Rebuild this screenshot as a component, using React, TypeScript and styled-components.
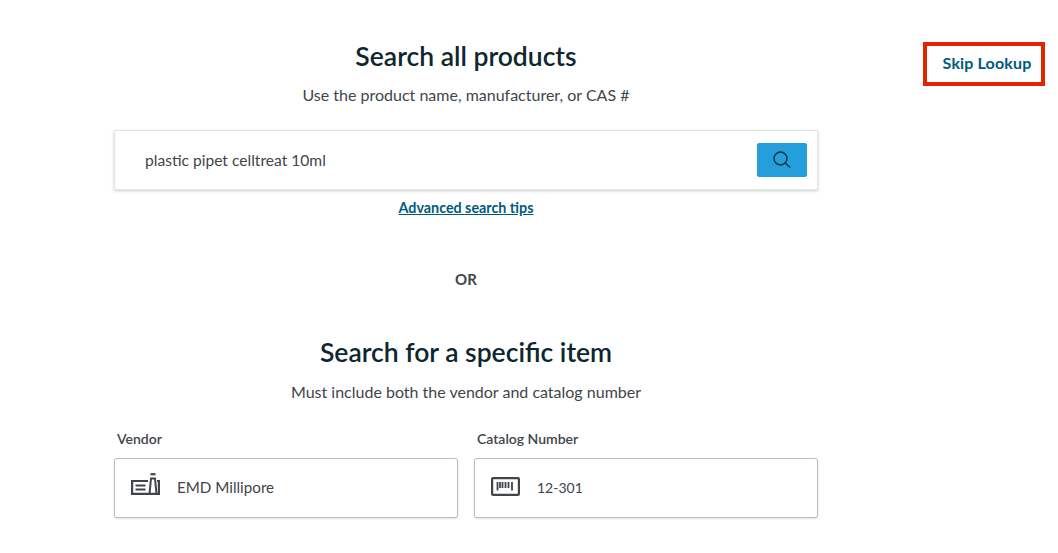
import * as React from 'react';
import styled, { createGlobalStyle } from 'styled-components';

const GlobalStyle = createGlobalStyle`
  html, body {
    margin: 0;
    padding: 0;
    background: #fff;
    font-family: Lato, "Open Sans", sans-serif;
    color: #414549;
  }
`;

const SearchIcon = () => (
  <svg width="18" height="18" viewBox="0 0 18 18" fill="none" stroke="#12303f" strokeWidth="1.4">
    <circle cx="7.5" cy="7.5" r="6.5" />
    <path d="M12.3 12.3L16.8 16" strokeLinecap="round" />
  </svg>
);

const VendorIcon = () => (
  <svg width="29" height="22" viewBox="0 0 29 22" fill="none" stroke="#414549" strokeWidth="2.2">
    <path d="M17 8H1.1V20.9H27.9V8H26" />
    <path d="M4.5 12.5H14.5M4.5 16.5H14.5" strokeWidth="2" />
    <path d="M18.5 21L20 5.5H24L25.5 21" strokeWidth="2" />
    <path d="M19.5 1.2H24.5" strokeWidth="2.2" />
  </svg>
);

const BarcodeIcon = () => (
  <svg width="29" height="19" viewBox="0 0 29 19" fill="none" stroke="#414549">
    <rect x="1.1" y="1.1" width="26.8" height="16.8" rx="1" strokeWidth="2.2" />
    <path d="M6.5 5V13.5M9 5V11M11.5 5V11M14.5 5V11M17.5 5V11M21 5V13.5" strokeWidth="1.8" />
  </svg>
);

export default function App() {
  return (
    <>
      <GlobalStyle />
      <Page>
        <Main>
          <Heading>Search all products</Heading>
          <Subheading>Use the product name, manufacturer, or CAS #</Subheading>
          <SearchBox>
            <SearchText>plastic pipet celltreat 10ml</SearchText>
            <SearchButton>
              <SearchIcon />
            </SearchButton>
          </SearchBox>
          <TipsLink href="#">Advanced search tips</TipsLink>
          <OrLabel>OR</OrLabel>
          <Heading>Search for a specific item</Heading>
          <Subheading $top={16}>Must include both the vendor and catalog number</Subheading>
          <FieldRow>
            <Field>
              <FieldLabel>Vendor</FieldLabel>
              <FieldBox>
                <IconSlot $lift={8}>
                  <VendorIcon />
                </IconSlot>
                <FieldValue>EMD Millipore</FieldValue>
              </FieldBox>
            </Field>
            <Field>
              <FieldLabel>Catalog Number</FieldLabel>
              <FieldBox>
                <IconSlot $lift={4}>
                  <BarcodeIcon />
                </IconSlot>
                <FieldValue $size={14}>12-301</FieldValue>
              </FieldBox>
            </Field>
          </FieldRow>
        </Main>
        <Side>
          <SkipButton>Skip Lookup</SkipButton>
        </Side>
      </Page>
    </>
  );
}

const Page = styled.div`
  display: flex;
  align-items: flex-start;
  padding: 42px 13px 0 114px;
  width: 1058px;
  height: 553px;
  box-sizing: border-box;
  overflow: hidden;
`;

const Main = styled.div`
  width: 704px;
  display: flex;
  flex-direction: column;
  align-items: center;
`;

const Heading = styled.h2`
  margin: 0;
  font-size: 26.5px;
  line-height: 28px;
  font-weight: 600;
  color: #0d2630;
`;

const Subheading = styled.p<{ $top?: number }>`
  margin: ${p => p.$top || 15}px 0 0;
  font-size: 16px;
  line-height: 20px;
  color: #414549;
`;

const SearchBox = styled.div`
  width: 100%;
  height: 60px;
  margin-top: 25px;
  box-sizing: border-box;
  display: flex;
  align-items: center;
  justify-content: space-between;
  padding: 0 10px 0 30px;
  border: 1px solid #e2e4ea;
  box-shadow: 0 1px 3px rgba(0, 0, 0, 0.2);
  background: #fff;
`;

const SearchText = styled.span`
  font-size: 15.6px;
  color: #414549;
`;

const SearchButton = styled.button`
  width: 50px;
  height: 34px;
  padding: 0 1px 0 0;
  border: none;
  border-radius: 2px;
  background: #259fdc;
  display: flex;
  align-items: center;
  justify-content: center;
`;

const TipsLink = styled.a`
  margin-top: 9px;
  font-size: 14.3px;
  line-height: 18px;
  font-weight: 700;
  color: #005a7c;
  text-decoration: underline;
`;

const OrLabel = styled.div`
  margin: 52px 0 49px;
  font-size: 15px;
  line-height: 20px;
  font-weight: 700;
  color: #414549;
`;

const FieldRow = styled.div`
  width: 100%;
  margin-top: 28px;
  display: grid;
  grid-template-columns: 344px 344px;
  justify-content: space-between;
`;

const Field = styled.div`
  display: flex;
  flex-direction: column;
`;

const FieldLabel = styled.label`
  margin-left: 3px;
  font-size: 14px;
  line-height: 18px;
  font-weight: 600;
  color: #414549;
`;

const FieldBox = styled.div`
  height: 60px;
  margin-top: 10px;
  box-sizing: border-box;
  display: flex;
  align-items: center;
  gap: 17px;
  padding: 0 16px;
  border: 1px solid #b9bdc2;
  border-radius: 3px;
  box-shadow: 0 1px 2px rgba(0, 0, 0, 0.12);
  background: #fff;
`;

const IconSlot = styled.span<{ $lift: number }>`
  display: flex;
  padding-bottom: ${p => p.$lift}px;
`;

const FieldValue = styled.span<{ $size?: number }>`
  padding-bottom: 2px;
  font-size: ${p => p.$size || 15.2}px;
  color: #414549;
`;

const Side = styled.div`
  margin-left: 105px;
`;

const SkipButton = styled.button`
  width: 122px;
  height: 44px;
  padding: 0 0 4px 6px;
  box-sizing: border-box;
  border: 4px solid #e32400;
  background: #fff;
  font-family: inherit;
  font-size: 16px;
  letter-spacing: 0.15px;
  font-weight: 700;
  color: #005a7c;
`;
